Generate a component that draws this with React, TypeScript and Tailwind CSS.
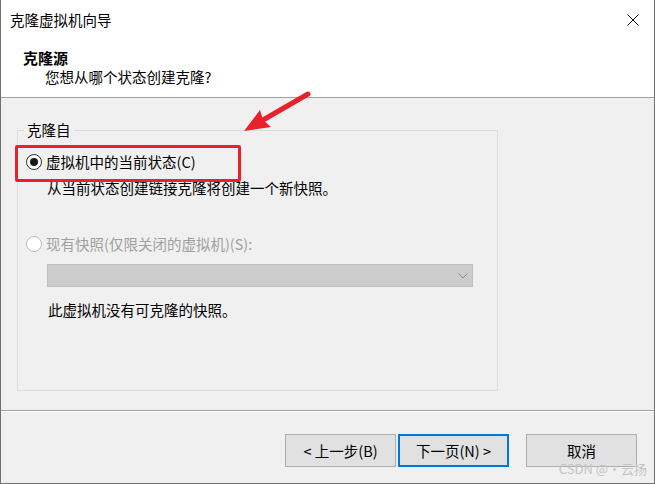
import React from "react";

function Radio({ checked, disabled }: { checked?: boolean; disabled?: boolean }) {
  return (
    <span
      className={
        "flex h-[16px] w-[16px] shrink-0 items-center justify-center rounded-full border bg-white " +
        (disabled ? "border-[#bcbcbc]" : "border-[#333333]")
      }
    >
      {checked && <span className="h-[8px] w-[8px] rounded-full bg-[#1a1a1a]" />}
    </span>
  );
}

function Btn({ children, focused }: { children: React.ReactNode; focused?: boolean }) {
  return (
    <button
      className={
        "flex h-[33px] w-[111px] items-center justify-center bg-[#e1e1e1] text-[14.5px] text-black " +
        (focused ? "border-2 border-[#0078d7]" : "border border-[#adadad]")
      }
    >
      {children}
    </button>
  );
}

export default function App() {
  return (
    <div
      className="relative h-[484px] w-[655px] overflow-hidden border-x border-b border-[#707070] bg-[#f0f0f0] text-[14.5px] text-black"
      style={{ fontFamily: '"Noto Sans CJK SC", "Microsoft YaHei", sans-serif' }}
    >
      {/* header */}
      <div className="flex h-[98px] flex-col border-b border-[#a0a0a0] bg-white">
        <div className="flex h-[40px] items-center justify-between pl-[9px] pr-[15px]">
          <span className="leading-[20px]">克隆虚拟机向导</span>
          <svg width="12" height="12" viewBox="0 0 12 12" className="block">
            <path d="M0.5 0.5 L11.5 11.5 M11.5 0.5 L0.5 11.5" stroke="#111" strokeWidth="1" fill="none" />
          </svg>
        </div>
        <div className="mt-[8px] pl-[22px] text-[15px] font-bold leading-[20px]">克隆源</div>
        <div className="pl-[44px] leading-[18px]">您想从哪个状态创建克隆?</div>
      </div>

      {/* content */}
      <div className="h-[312px] pl-[16px] pt-[32px]">
        <div className="relative h-[261px] w-[481px] border border-[#dcdcdc] pl-[8px] pt-[21px]">
          <span className="absolute left-[6px] top-[-11px] bg-[#f0f0f0] px-[3px] leading-[20px]">克隆自</span>
          <div className="flex h-[20px] items-center gap-[4px]">
            <Radio checked />
            <span className="leading-[20px]">虚拟机中的当前状态(C)</span>
          </div>
          <div className="ml-[21px] mt-[6px] leading-[20px]">从当前状态创建链接克隆将创建一个新快照。</div>
          <div className="mt-[36px] flex h-[20px] items-center gap-[4px]">
            <Radio disabled />
            <span className="leading-[20px] text-[#a0a0a0]">现有快照(仅限关闭的虚拟机)(S):</span>
          </div>
          <div className="ml-[21px] mt-[10px] flex h-[23px] w-[426px] items-center justify-end border border-[#bfbfbf] bg-[#cccccc] pr-[4px]">
            <svg width="10" height="6" viewBox="0 0 10 6" className="block">
              <path d="M0.5 0.5 L5 5 L9.5 0.5" stroke="#8c8c8c" strokeWidth="1" fill="none" />
            </svg>
          </div>
          <div className="ml-[22px] mt-[13px] leading-[20px]">此虚拟机没有可克隆的快照。</div>
        </div>
      </div>

      {/* separator */}
      <div className="h-[1px] bg-[#a0a0a0]" />
      <div className="h-[1px] bg-white" />

      {/* footer */}
      <div className="flex justify-end pr-[17px] pt-[22px]">
        <Btn>&lt; 上一步(B)</Btn>
        <div className="ml-[2px] mr-[17px]">
          <Btn focused>下一页(N) &gt;</Btn>
        </div>
        <Btn>取消</Btn>
      </div>

      {/* annotation: red box */}
      <div className="pointer-events-none absolute left-[14px] top-[145px] h-[37px] w-[226px] rounded-[2px] border-[3px] border-[#e8212b]" />

      {/* annotation: arrow */}
      <svg className="pointer-events-none absolute left-0 top-0" width="655" height="484" viewBox="0 0 655 484">
        <line x1="307" y1="94" x2="262" y2="120" stroke="#e8212b" strokeWidth="5" strokeLinecap="round" />
        <polygon points="243,131 259,110 262,120 270,127" fill="#e8212b" />
      </svg>

      {/* watermark */}
      <span className="pointer-events-none absolute bottom-[6px] right-[7px] text-[13px] leading-[16px] text-[#c4c4c4]">
        CSDN @·云扬
      </span>
    </div>
  );
}
